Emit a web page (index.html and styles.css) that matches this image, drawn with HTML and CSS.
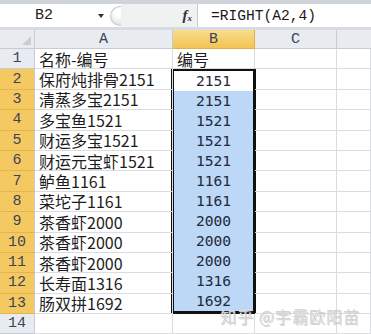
FILE: index.html
```html
<!DOCTYPE html>
<html>
<head>
  <meta charset="UTF-8">
  <link rel="stylesheet" href="styles.css">
</head>
<body>
  <div class="app">
    <div class="formula-bar">
      <div class="name-box">B2</div>
      <span class="drop"></span>
      <span class="knob"></span>
      <div class="fx-zone"><span class="fx">f<sub>x</sub></span></div>
      <div class="formula">=RIGHT(A2,4)</div>
    </div>

    <div class="sheet">
      <div class="corner"><span class="corner-tri"></span></div>
      <div class="col-head">A</div>
      <div class="col-head sel">B</div>
      <div class="col-head">C</div>
      <div class="col-head last"></div>

      <!-- selected range B2:B13 -->
      <div class="selection">
        <div class="sel-cell active">2151</div>
        <div class="sel-cell">2151</div>
        <div class="sel-cell">1521</div>
        <div class="sel-cell">1521</div>
        <div class="sel-cell">1521</div>
        <div class="sel-cell">1161</div>
        <div class="sel-cell">1161</div>
        <div class="sel-cell">2000</div>
        <div class="sel-cell">2000</div>
        <div class="sel-cell">2000</div>
        <div class="sel-cell">1316</div>
        <div class="sel-cell">1692</div>
      </div>

      <div class="row-head">1</div><div class="cell">名称-编号</div><div class="cell">编号</div><div class="cell"></div><div class="cell"></div>
      <div class="row-head sel">2</div><div class="cell">保府炖排骨2151</div><div class="cell"></div><div class="cell"></div>
      <div class="row-head sel">3</div><div class="cell">清蒸多宝2151</div><div class="cell"></div><div class="cell"></div>
      <div class="row-head sel">4</div><div class="cell">多宝鱼1521</div><div class="cell"></div><div class="cell"></div>
      <div class="row-head sel">5</div><div class="cell">财运多宝1521</div><div class="cell"></div><div class="cell"></div>
      <div class="row-head sel">6</div><div class="cell">财运元宝虾1521</div><div class="cell"></div><div class="cell"></div>
      <div class="row-head sel">7</div><div class="cell">鲈鱼1161</div><div class="cell"></div><div class="cell"></div>
      <div class="row-head sel">8</div><div class="cell">菜坨子1161</div><div class="cell"></div><div class="cell"></div>
      <div class="row-head sel">9</div><div class="cell">茶香虾2000</div><div class="cell"></div><div class="cell"></div>
      <div class="row-head sel">10</div><div class="cell">茶香虾2000</div><div class="cell"></div><div class="cell"></div>
      <div class="row-head sel">11</div><div class="cell">茶香虾2000</div><div class="cell"></div><div class="cell"></div>
      <div class="row-head sel">12</div><div class="cell">长寿面1316</div><div class="cell"></div><div class="cell"></div>
      <div class="row-head sel">13</div><div class="cell">肠双拼1692</div><div class="cell"></div><div class="cell"></div>
      <div class="row-head">14</div><div class="cell"></div><div class="cell"></div><div class="cell"></div><div class="cell"></div>
    </div>

    <div class="watermark">知乎 @宇霸欧阳苗</div>
  </div>
</body>
</html>
```

FILE: styles.css
```css
:root {
  --grid-line: #dadcdf;
  --head-bg: #e8ecf1;
  --head-line: #c6ccd4;
  --head-text: #3b4556;
  --sel-head: #f5c961;
  --sel-fill: #bdd7f6;
  --text: #1d1d1d;
}

body {
  margin: 0;
  width: 371px;
  height: 334px;
  overflow: hidden;
  background: #ffffff;
  font-family: "Noto Sans CJK SC", "Noto Sans", sans-serif;
  color: var(--text);
}

.app {
  position: relative;
  height: 334px;
}

/* Formula bar */
.formula-bar {
  height: 23px;
  border-top: 4px solid #cfd4da;
  border-bottom: 3px solid #d8dce2;
  display: flex;
  align-items: center;
  background: #ffffff;
}

.name-box {
  width: 60px;
  padding-left: 35px;
  font-family: "Liberation Mono", monospace;
  font-size: 15px;
  color: #222;
}

.drop {
  width: 0;
  height: 0;
  border-left: 3px solid transparent;
  border-right: 3px solid transparent;
  border-top: 4px solid #333;
  margin-left: 3px;
}

.knob {
  width: 11px;
  height: 20px;
  margin-left: 6px;
  border-radius: 10px 0 0 10px;
  border: 1px solid #c3c8ce;
  border-right: none;
  background: radial-gradient(circle at 80% 30%, #ffffff 0 25%, #e6e9ec 70%);
  box-sizing: border-box;
}

.fx-zone {
  align-self: stretch;
  width: 77px;
  background: #eff1f3;
  border-right: 1px solid #c8cdd3;
  display: flex;
  align-items: center;
  justify-content: flex-end;
  padding-right: 5px;
  box-sizing: border-box;
}

.fx {
  font-family: "Liberation Serif", serif;
  font-style: italic;
  font-weight: 700;
  font-size: 15px;
  color: #333;
}

.fx sub {
  font-size: 9px;
  vertical-align: -1px;
}

.formula {
  padding-left: 13px;
  font-family: "Liberation Mono", monospace;
  font-size: 14.6px;
  color: #1a1a1a;
}

/* Sheet grid */
.sheet {
  display: grid;
  grid-template-columns: 35px 138px 82px 82px 1fr;
  grid-template-rows: 19px repeat(14, 20.4px);
}

.corner {
  background: var(--head-bg);
  border-right: 1px solid var(--head-line);
  border-bottom: 1px solid var(--head-line);
  display: flex;
  justify-content: flex-end;
  align-items: flex-end;
  padding: 0 3px 3px 0;
}

.corner-tri {
  width: 0;
  height: 0;
  border-left: 9px solid transparent;
  border-bottom: 9px solid #c9ced6;
}

.col-head {
  background: var(--head-bg);
  border-right: 1px solid var(--head-line);
  border-bottom: 1px solid var(--head-line);
  display: flex;
  align-items: center;
  justify-content: center;
  font-family: "Liberation Mono", monospace;
  font-size: 15px;
  color: var(--head-text);
}

.col-head.sel {
  background: linear-gradient(#f9dc8e, #f3c453);
  border-color: #e2b243;
}

.col-head.last {
  border-right: none;
}

.row-head {
  grid-column: 1;
  background: var(--head-bg);
  border-right: 1px solid var(--head-line);
  border-bottom: 1px solid var(--head-line);
  display: flex;
  align-items: center;
  justify-content: center;
  font-family: "Liberation Mono", monospace;
  font-size: 15px;
  color: var(--head-text);
}

.row-head.sel {
  background: var(--sel-head);
  border-bottom-color: #e4b54c;
}

.cell {
  border-right: 1px solid var(--grid-line);
  border-bottom: 1px solid var(--grid-line);
  display: flex;
  align-items: center;
  font-size: 16px;
  line-height: 1;
  padding-left: 4px;
  white-space: nowrap;
}

.selection {
  grid-column: 3;
  grid-row: 3 / span 12;
  margin: -1px -1px 0 -2px;
  border: 3px solid #111;
  display: flex;
  flex-direction: column;
  background: var(--sel-fill);
}

.sel-cell {
  flex: 1;
  display: flex;
  align-items: center;
  justify-content: center;
  font-family: "DejaVu Sans Mono", monospace;
  font-size: 14.6px;
  line-height: 1;
  color: #1f2a3d;
}

.sel-cell.active {
  background: #ffffff;
}

.watermark {
  position: absolute;
  right: 11px;
  bottom: 10px;
  font-size: 16px;
  line-height: 1;
  letter-spacing: 1px;
  color: rgba(205, 205, 205, 0.9);
  text-shadow: 0 0 1px #ffffff, 1px 1px 0 rgba(120, 120, 120, 0.35);
}
```
